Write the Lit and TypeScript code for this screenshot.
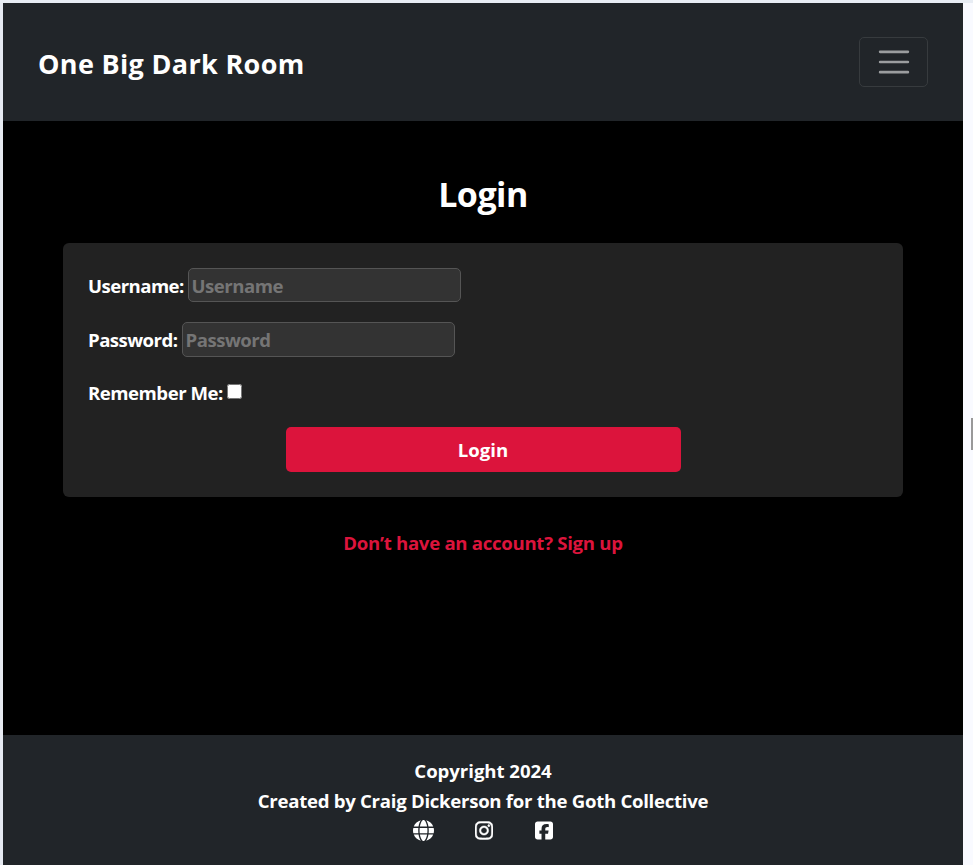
import { LitElement, html, css } from "lit";
import { customElement } from "lit/decorators.js";

@customElement("app-root")
export class AppRoot extends LitElement {
  static styles = css`
    :host {
      display: block;
      box-sizing: border-box;
      width: 100%;
      height: 865px;
      padding: 3px 10px 0 3px;
      background: linear-gradient(#e8edf4 0 3px, transparent 3px),
        linear-gradient(90deg, #e6eaf1 0 3px, #f9faff 3px);
      font-family: "Open Sans", "Noto Sans", sans-serif;
      font-weight: 700;
      font-size: 18.6px;
      line-height: 30px;
      color: #fff;
      position: relative;
      overflow: hidden;
    }
    * { box-sizing: border-box; }
    .page { height: 862px; display: flex; flex-direction: column; background: #000; }
    header {
      height: 118px;
      flex: none;
      padding: 0 35px;
      display: flex;
      align-items: center;
      justify-content: space-between;
      background: #212529;
    }
    .brand { font-size: 27px; letter-spacing: 0.33px; white-space: nowrap; padding-top: 3px; }
    .toggler {
      width: 69px;
      height: 50px;
      padding: 0;
      background: none;
      border: 1px solid #373b3e;
      border-radius: 5px;
      display: grid;
      place-items: center;
    }
    .toggler svg { width: 38px; height: 38px; display: block; }
    main { flex: 1; display: flex; flex-direction: column; padding: 0 60px; }
    h1 {
      margin: 50px 0 0;
      height: 72px;
      line-height: 46px;
      font-size: 34px;
      text-align: center;
      font-weight: 700;
      letter-spacing: -0.5px;
    }
    form {
      height: 254px;
      padding: 25px;
      display: flex;
      flex-direction: column;
      background: #222;
      border-radius: 6px;
    }
    .row { display: flex; height: 34px; margin-bottom: 20px; white-space: nowrap; line-height: 36px; }
    .row label { flex: none; letter-spacing: -0.55px; }
    .user { width: 100px; }
    .pass { width: 94px; }
    .row .remember { width: 139px; letter-spacing: -0.48px; }
    .row.second { height: 35px; }
    .row.last { margin-bottom: 16px; line-height: 32px; }
    .field {
      width: 273px;
      height: 100%;
      padding: 1px 3px 0 2.500px;
      margin: 0;
      font: inherit;
      letter-spacing: -0.5px;
      color: #fff;
      background: #333;
      border: 1px solid #555;
      border-radius: 5px;
    }
    .second .field { padding-top: 0; padding-bottom: 1px; }
    .field::placeholder { color: #757575; opacity: 1; }
    .check { width: 15px; height: 15px; margin: 7px 0 0; }
    .submit {
      width: 395px;
      height: 45px;
      margin: 0 auto;
      padding: 1px 0 0;
      flex: none;
      border: 0;
      border-radius: 5px;
      background: #dc143c;
      color: #fff;
      font: inherit;
      letter-spacing: 0;
    }
    .signup { margin: 31px auto 0; color: #dc143c; text-decoration: none; letter-spacing: -0.29px; white-space: nowrap; }
    footer {
      height: 130px;
      flex: none;
      padding-top: 21px;
      background: #212529;
      display: flex;
      flex-direction: column;
      align-items: center;
      white-space: nowrap;
      letter-spacing: -0.28px;
    }
    .copyright { letter-spacing: -0.05px; }
    .social { display: flex; width: 140px; height: 21px; margin-top: 4px; }
    .social a { display: block; height: 21px; color: #fff; }
    .social a + a { margin-left: 41px; }
    .social a:last-child { margin-left: 42px; }
    .social svg { display: block; height: 21px; fill: currentColor; }
    .globe { width: 21px; }
    .square { width: 18px; }
    .outlined { stroke: currentColor; stroke-width: 12px; }
    .handle { position: absolute; right: 0; top: 418px; width: 2px; height: 32px; background: #999; }
  `;

  render() {
    return html`
      <div class="page">
        <header>
          <div class="brand">One Big Dark Room</div>
          <button class="toggler" aria-label="Toggle navigation">
            <svg viewBox="0 0 30 30">
              <path stroke="#9b9d9f" stroke-linecap="round" stroke-miterlimit="10" stroke-width="2" d="M4 7h22M4 15h22M4 23h22" />
            </svg>
          </button>
        </header>
        <main>
          <h1><span class="heading">Login</span></h1>
          <form>
            <div class="row">
              <label class="user" for="username">Username:</label>
              <input class="field" id="username" placeholder="Username" />
            </div>
            <div class="row second">
              <label class="pass" for="password">Password:</label>
              <input class="field" id="password" type="password" placeholder="Password" />
            </div>
            <div class="row last">
              <label class="remember" for="remember">Remember Me:</label>
              <input class="check" id="remember" type="checkbox" />
            </div>
            <button class="submit" type="button">Login</button>
          </form>
          <a class="signup" href="#">Don’t have an account? Sign up</a>
        </main>
        <footer>
          <div class="copyright">Copyright 2024</div>
          <div class="credit">Created by Craig Dickerson for the Goth Collective</div>
          <div class="social">
            <a href="#" aria-label="Website">
              <svg class="globe" viewBox="0 0 512 512"><path d="M352 256c0 22.2-1.2 43.6-3.3 64H163.3c-2.2-20.4-3.3-41.8-3.3-64s1.2-43.6 3.3-64H348.7c2.2 20.4 3.3 41.8 3.3 64zm28.8-64H503.9c5.3 20.5 8.1 41.9 8.1 64s-2.8 43.5-8.1 64H380.8c2.1-20.6 3.2-42 3.2-64s-1.1-43.4-3.2-64zm112.6-32H376.7c-10-63.9-29.8-117.4-55.3-151.6c78.3 20.7 142 77.5 171.900 151.600zm-149.100 0H167.700c6.100-36.400 15.500-68.600 27-94.700c10.500-23.600 22.200-40.700 33.500-51.500C239.400 3.200 248.700 0 256 0s16.600 3.200 27.800 13.800c11.300 10.800 23 27.900 33.500 51.500c11.600 26 20.900 58.200 27 94.700zm-209 0H18.600C48.600 85.900 112.200 29.100 190.600 8.400C165.100 42.600 145.300 96.100 135.300 160zM8.100 192H131.200c-2.100 20.600-3.200 42-3.200 64s1.100 43.400 3.200 64H8.100C2.800 299.500 0 278.100 0 256s2.800-43.500 8.100-64zM194.700 446.600c-11.600-26-20.900-58.200-27-94.600H344.300c-6.100 36.400-15.500 68.600-27 94.600c-10.500 23.600-22.200 40.700-33.500 51.500C272.600 508.800 263.300 512 256 512s-16.600-3.200-27.800-13.800c-11.300-10.800-23-27.900-33.500-51.500zM135.300 352c10 63.900 29.800 117.400 55.300 151.600C112.200 482.900 48.600 426.100 18.600 352H135.300zm358.100 0c-30 74.100-93.600 130.900-171.900 151.600c25.500-34.200 45.200-87.700 55.300-151.600H493.400z" /></svg>
            </a>
            <a href="#" aria-label="Instagram">
              <svg class="square outlined" viewBox="0 0 448 512"><path d="M224.100 141c-63.600 0-114.900 51.300-114.900 114.900s51.300 114.900 114.900 114.900S339 319.500 339 255.900 287.700 141 224.100 141zm0 189.600c-41.100 0-74.700-33.500-74.700-74.700s33.500-74.700 74.700-74.700 74.700 33.500 74.700 74.700-33.600 74.700-74.700 74.700zm146.400-194.300c0 14.900-12 26.800-26.800 26.800-14.900 0-26.800-12-26.800-26.800s12-26.800 26.800-26.800 26.800 12 26.800 26.800zm76.100 27.200c-1.700-35.900-9.900-67.700-36.200-93.900-26.200-26.200-58-34.400-93.900-36.200-37-2.100-147.900-2.100-184.900 0-35.800 1.700-67.600 9.900-93.900 36.100s-34.400 58-36.200 93.900c-2.100 37-2.100 147.900 0 184.900 1.700 35.900 9.900 67.700 36.200 93.900s58 34.400 93.900 36.200c37 2.100 147.900 2.100 184.900 0 35.900-1.700 67.700-9.900 93.900-36.200 26.200-26.200 34.400-58 36.200-93.900 2.100-37 2.100-147.800 0-184.800zM398.800 388c-7.800 19.600-22.900 34.700-42.600 42.600-29.500 11.700-99.500 9-132.100 9s-102.700 2.600-132.100-9c-19.600-7.800-34.700-22.900-42.600-42.600-11.700-29.500-9-99.500-9-132.100s-2.600-102.700 9-132.100c7.800-19.600 22.900-34.700 42.600-42.600 29.500-11.700 99.500-9 132.100-9s102.700-2.600 132.100 9c19.600 7.800 34.700 22.900 42.600 42.600 11.700 29.500 9 99.500 9 132.100s2.700 102.700-9 132.100z" /></svg>
            </a>
            <a href="#" aria-label="Facebook">
              <svg class="square" viewBox="0 0 448 512"><path d="M64 32C28.700 32 0 60.700 0 96V416c0 35.300 28.700 64 64 64h98.200V334.200H109.400V256h52.800V222.300c0-87.100 39.400-127.500 125-127.500c16.200 0 44.200 3.200 55.700 6.400V172c-6-.6-16.500-1-29.600-1c-42 0-58.200 15.900-58.200 57.200V256h83.600l-14.400 78.200H255V480H384c35.300 0 64-28.700 64-64V96c0-35.300-28.700-64-64-64H64z" /></svg>
            </a>
          </div>
        </footer>
      </div>
      <div class="handle"></div>
    `;
  }
}
